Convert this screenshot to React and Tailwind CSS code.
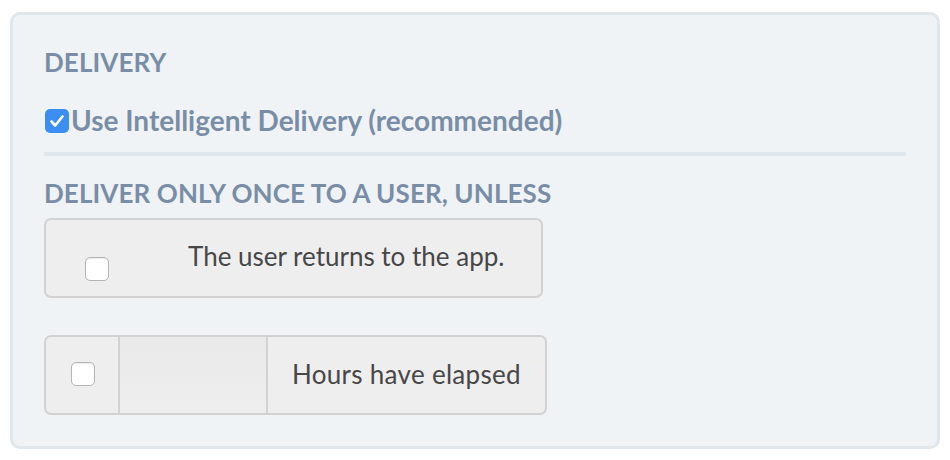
import React from "react";

const heading = "font-['Lato',sans-serif] font-bold text-[#798ea6]";

const EmptyBox = () => (
  <div className="h-[24px] w-[24px] rounded-[5px] border border-[#b5b5b5] bg-white shadow-[inset_0_1px_1px_rgba(0,0,0,0.08)]" />
);

export default function App() {
  return (
    <div className="min-h-[460px] w-[950px] bg-white px-[10px] pt-[12px]">
      <div className="h-[437px] w-[930px] rounded-[10px] border-[3px] border-[#dfe6ec] bg-[#f0f3f6] px-[31px] pt-[33px]">
        <div className={`${heading} text-[26px] leading-[28px] tracking-[0.1px]`}>DELIVERY</div>

        <div className="mt-[33px] flex h-[24px] items-center">
          <div className="ml-[1px] flex h-[24px] w-[24px] items-center justify-center rounded-[5px] bg-[#3d8ef2]">
            <svg width="16" height="14" viewBox="0 0 16 14" fill="none">
              <path d="M2.5 7.5 L6.2 11.5 L13.5 2.5" stroke="white" strokeWidth="2.6" strokeLinecap="round" strokeLinejoin="round" />
            </svg>
          </div>
          <span className={`${heading} mb-[3px] ml-[2px] text-[28px] leading-[24px]`}>Use Intelligent Delivery (recommended)</span>
        </div>

        <div className="mt-[19px] h-[4px] w-full bg-[#dfe6ec]" />

        <div className={`${heading} mt-[23px] text-[26px] leading-[28px] tracking-[0.1px]`}>
          DELIVER ONLY ONCE TO A USER, UNLESS
        </div>

        <div className="mt-[11px] flex h-[80px] w-[499px] items-start rounded-[7px] border-2 border-[#d2d2d2] bg-[#eeeeee] font-['Lato',sans-serif] text-[#474747]">
          <div className="pl-[39px] pt-[37px]">
            <EmptyBox />
          </div>
          <div className="ml-[79px] pt-[21px] text-[26px] leading-[30px]">The user returns to the app.</div>
        </div>

        <div className="mt-[37px] flex h-[80px] w-[503px] rounded-[7px] border-2 border-[#d2d2d2] bg-[#eeeeee] font-['Lato',sans-serif] text-[#474747]">
          <div className="flex w-[74px] items-center justify-center border-r-2 border-[#d2d2d2] pb-[2px] pl-[2px]">
            <EmptyBox />
          </div>
          <div className="w-[148px] border-r-2 border-[#d2d2d2] bg-gradient-to-b from-[#e9e9e9] to-[#eeeeee]" />
          <div className="flex flex-1 items-center pb-[2px] pl-[24px] text-[26px] leading-[30px] tracking-[0.3px]">Hours have elapsed</div>
        </div>
      </div>
    </div>
  );
}
